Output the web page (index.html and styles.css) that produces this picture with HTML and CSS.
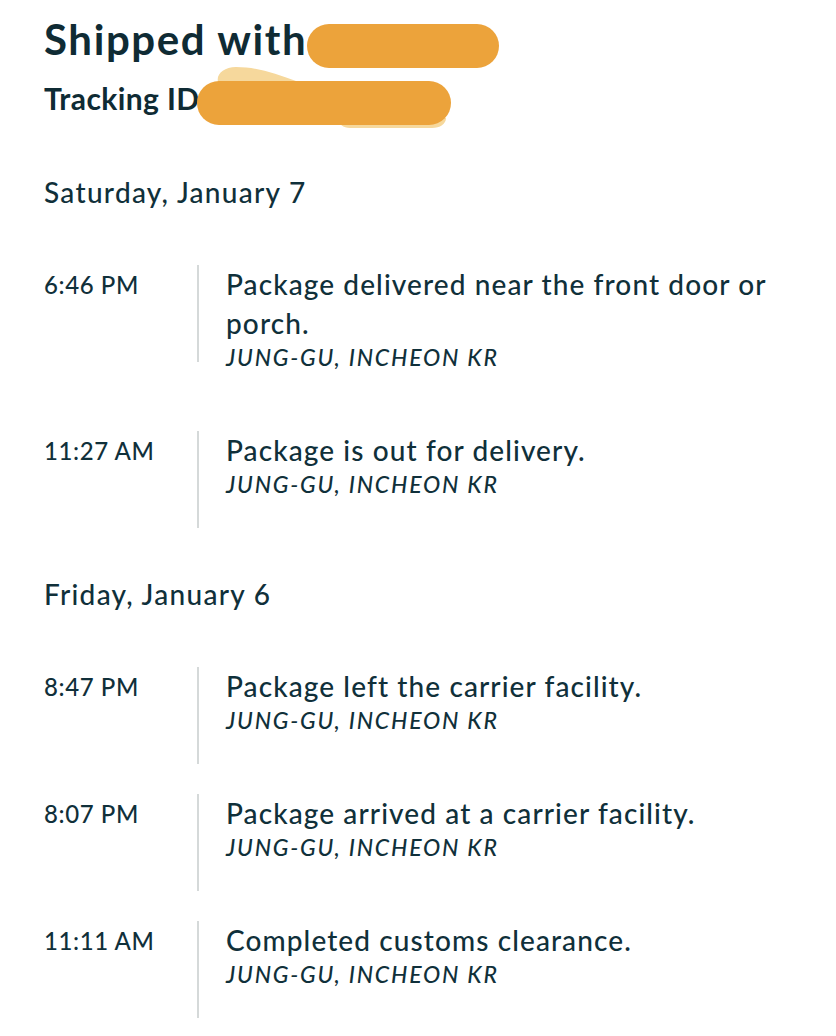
FILE: index.html
```html
<!DOCTYPE html>
<html lang="en">
<head>
<meta charset="utf-8">
<title>Tracking</title>
<link rel="stylesheet" href="styles.css">
</head>
<body>
<main class="page">
  <header class="ship-header">
    <h1 class="title">Shipped with</h1>
    <p class="tracking">Tracking ID</p>
    <svg class="redact" width="836" height="140" viewBox="0 0 836 140" aria-hidden="true">
      <path d="M218 82 C216 74 224 67 236 67 C258 67 276 74 296 81 L300 100 L220 100 Z" fill="#f6d89c"/>
      <path d="M336 118 L446 118 C446 124 440 128 432 128 L350 128 C343 128 339 124 336 118 Z" fill="#f6d89c"/>
      <rect x="307" y="24" width="192" height="44" rx="22" fill="#eca33b"/>
      <rect x="197" y="81" width="254" height="44" rx="22" fill="#eca33b"/>
    </svg>
  </header>

  <section class="day">
    <h2 class="day-title">Saturday, January 7</h2>
    <div class="events">
      <div class="event">
        <div class="time">6:46 PM</div>
        <div class="rail"></div>
        <div class="detail">
          <div class="desc">Package delivered near the front door or porch.</div>
          <div class="loc">JUNG-GU, INCHEON KR</div>
        </div>
      </div>
      <div class="event">
        <div class="time">11:27 AM</div>
        <div class="rail"></div>
        <div class="detail">
          <div class="desc">Package is out for delivery.</div>
          <div class="loc">JUNG-GU, INCHEON KR</div>
        </div>
      </div>
    </div>
  </section>

  <section class="day">
    <h2 class="day-title">Friday, January 6</h2>
    <div class="events">
      <div class="event">
        <div class="time">8:47 PM</div>
        <div class="rail"></div>
        <div class="detail">
          <div class="desc">Package left the carrier facility.</div>
          <div class="loc">JUNG-GU, INCHEON KR</div>
        </div>
      </div>
      <div class="event">
        <div class="time">8:07 PM</div>
        <div class="rail"></div>
        <div class="detail">
          <div class="desc">Package arrived at a carrier facility.</div>
          <div class="loc">JUNG-GU, INCHEON KR</div>
        </div>
      </div>
      <div class="event">
        <div class="time">11:11 AM</div>
        <div class="rail"></div>
        <div class="detail">
          <div class="desc">Completed customs clearance.</div>
          <div class="loc">JUNG-GU, INCHEON KR</div>
        </div>
      </div>
    </div>
  </section>
</main>
</body>
</html>
```

FILE: styles.css
```css
* { box-sizing: border-box; }

html, body {
  margin: 0;
  padding: 0;
  background: #ffffff;
}

body {
  font-family: Lato, "Noto Sans", "Liberation Sans", sans-serif;
  font-weight: 500;
  color: #10303a;
  overflow: hidden;
}

.page {
  padding: 14px 44px 0 44px;
  display: flex;
  flex-direction: column;
  gap: 46px;
}

.ship-header {
  display: flex;
  flex-direction: column;
  gap: 14px;
  margin-bottom: 8px;
}

.title {
  margin: 0;
  font-size: 42px;
  line-height: 50px;
  font-weight: 700;
  letter-spacing: 1.6px;
  color: #0f2b34;
}

.tracking {
  margin: 0;
  font-size: 30px;
  line-height: 40px;
  font-weight: 700;
  letter-spacing: 0.4px;
  color: #0f2b34;
}

.redact {
  position: absolute;
  top: 0;
  left: 0;
  pointer-events: none;
}

.day {
  display: flex;
  flex-direction: column;
  gap: 53px;
}

.day-title {
  margin: 0;
  font-size: 28px;
  line-height: 40px;
  font-weight: 500;
  letter-spacing: 1.3px;
}

.events {
  display: flex;
  flex-direction: column;
  gap: 30px;
}

.event {
  display: flex;
  align-items: flex-start;
}

.time {
  width: 153px;
  flex-shrink: 0;
  font-size: 24px;
  line-height: 39px;
  letter-spacing: 0.6px;
}

.rail {
  width: 2px;
  height: 97px;
  flex-shrink: 0;
  background: #d5d9d9;
}

.detail {
  padding: 0 0 30px 27px;
  flex: 1;
}

.desc {
  font-size: 28px;
  line-height: 39px;
  letter-spacing: 1.1px;
}

.loc {
  font-size: 23px;
  line-height: 28px;
  font-style: italic;
  letter-spacing: 1.8px;
}
```
